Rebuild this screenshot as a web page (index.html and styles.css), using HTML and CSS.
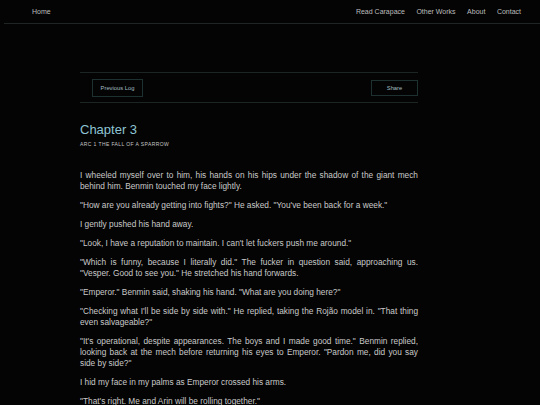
FILE: index.html
```html
<!DOCTYPE html>
<html lang="en">
<head>
<meta charset="utf-8">
<title>Chapter 3</title>
<link rel="stylesheet" href="styles.css">
</head>
<body>
<nav class="topnav">
  <a class="nav-link" href="#">Home</a>
  <div class="nav-right">
    <a class="nav-link" href="#">Read Carapace</a>
    <a class="nav-link" href="#">Other Works</a>
    <a class="nav-link" href="#">About</a>
    <a class="nav-link" href="#">Contact</a>
  </div>
</nav>
<main class="content">
  <div class="toolbar">
    <a class="btn btn-prev" href="#">Previous Log</a>
    <a class="btn btn-share" href="#">Share</a>
  </div>
  <h1 class="chapter-title">Chapter 3</h1>
  <div class="chapter-sub">Arc 1 The Fall of a Sparrow</div>
  <article class="story">
    <p>I wheeled myself over to him, his hands on his hips under the shadow of the giant mech behind him. Benmin touched my face lightly.</p>
    <p>"How are you already getting into fights?" He asked. "You've been back for a week."</p>
    <p>I gently pushed his hand away.</p>
    <p>"Look, I have a reputation to maintain. I can't let fuckers push me around."</p>
    <p>"Which is funny, because I literally did." The fucker in question said, approaching us. "Vesper. Good to see you." He stretched his hand forwards.</p>
    <p>"Emperor." Benmin said, shaking his hand. "What are you doing here?"</p>
    <p>"Checking what I'll be side by side with." He replied, taking the Rojão model in. "That thing even salvageable?"</p>
    <p>"It's operational, despite appearances. The boys and I made good time." Benmin replied, looking back at the mech before returning his eyes to Emperor. "Pardon me, did you say side by side?"</p>
    <p>I hid my face in my palms as Emperor crossed his arms.</p>
    <p>"That's right. Me and Arin will be rolling together."</p>
  </article>
</main>
</body>
</html>
```
FILE: styles.css
```css
html, body {
  margin: 0;
  padding: 0;
  background: #040404;
}
body {
  font-family: "Liberation Sans", Arial, sans-serif;
  color: #c9c9c9;
}
.topnav {
  margin-left: 4px;
  height: 23px;
  border-bottom: 1px solid #1f2424;
  display: flex;
  align-items: center;
  justify-content: space-between;
  padding: 0 19px 0 28px;
  font-size: 7px;
}
.nav-right {
  display: flex;
  gap: 11.5px;
}
.nav-link {
  color: #bdbdbd;
  text-decoration: none;
}
.content {
  width: 338px;
  margin: 48px 0 0 80px;
}
.toolbar {
  height: 29px;
  border-top: 1px solid #1c2424;
  border-bottom: 1px solid #1c2424;
  display: flex;
  align-items: center;
  justify-content: space-between;
  padding-left: 12px;
}
.btn {
  display: flex;
  align-items: center;
  justify-content: center;
  height: 16px;
  border: 1px solid #1d3230;
  color: #a3bcc0;
  font-size: 5.8px;
  text-decoration: none;
  box-sizing: border-box;
}
.btn-prev {
  height: 18px;
  width: 51px;
}
.btn-share {
  width: 47px;
}
.chapter-title {
  margin: 19px 0 0;
  font-size: 13px;
  line-height: 15px;
  font-weight: normal;
  color: #8ec4d5;
}
.chapter-sub {
  margin-top: 4px;
  font-size: 5px;
  line-height: 7px;
  letter-spacing: 0.4px;
  text-transform: uppercase;
  color: #c4c4c4;
}
.story {
  margin-top: 22px;
}
.story p {
  margin: 0 0 8px;
  font-size: 8.3px;
  line-height: 11px;
  text-align: justify;
}
```
